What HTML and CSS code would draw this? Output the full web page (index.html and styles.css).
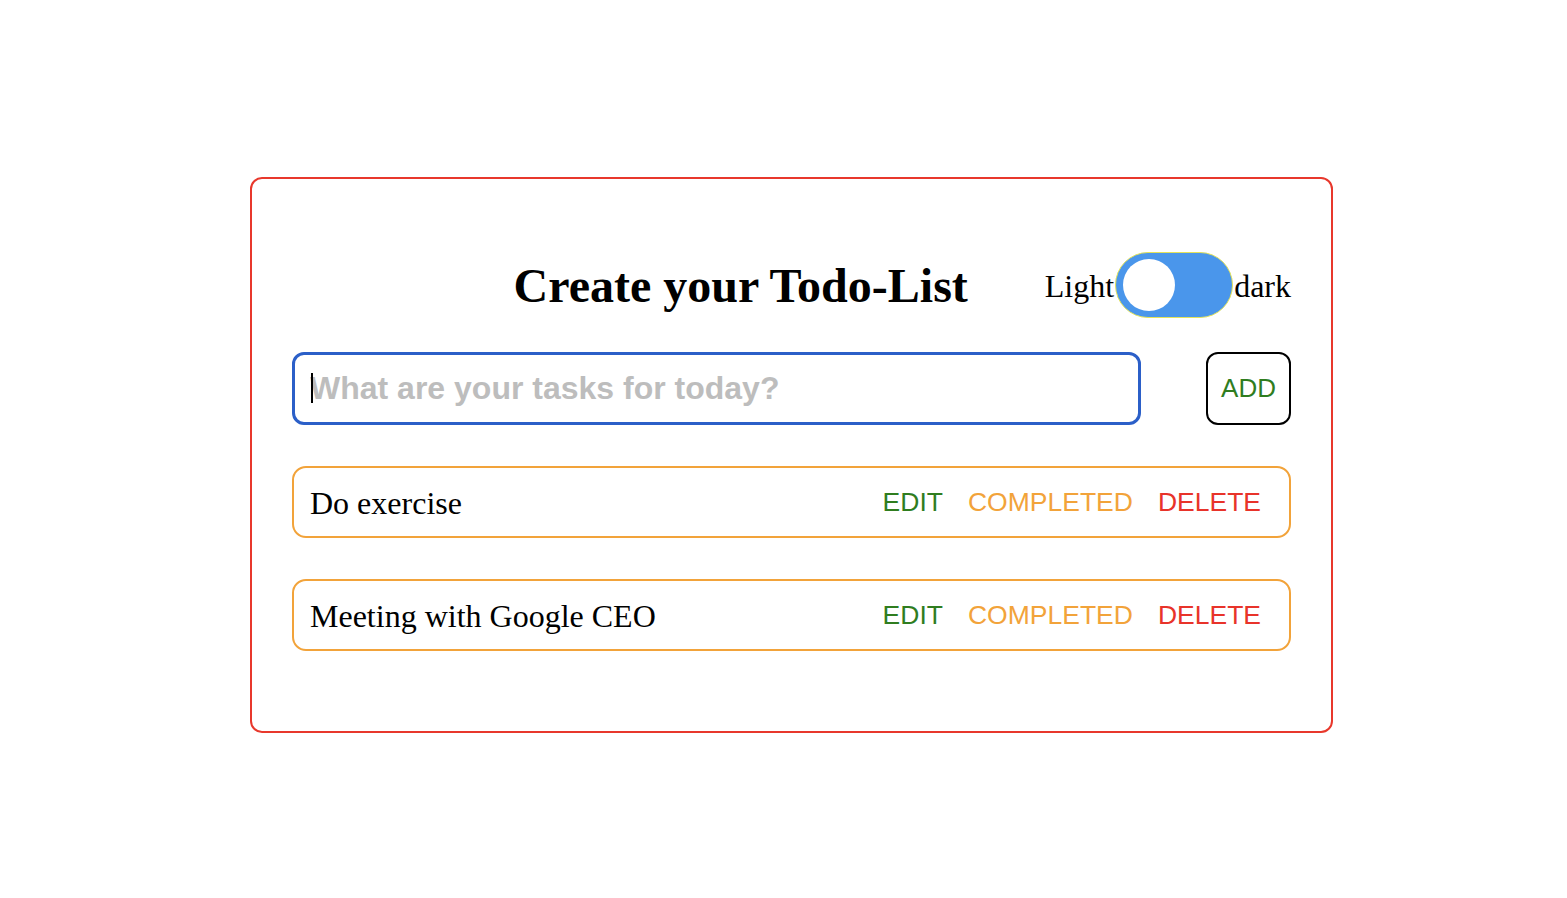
FILE: index.html
```html
<!DOCTYPE html>
<html lang="en">
<head>
<meta charset="utf-8">
<title>Todo-List</title>
<link rel="stylesheet" href="styles.css">
</head>
<body>
<main class="card">
  <header class="header">
    <h1 class="title">Create your Todo-List</h1>
    <div class="theme">
      <span class="theme-label">Light</span>
      <span class="switch"><span class="knob"></span></span>
      <span class="theme-label">dark</span>
    </div>
  </header>
  <form class="entry">
    <div class="field">
      <input class="task-input" type="text" placeholder="What are your tasks for today?">
      <span class="caret"></span>
    </div>
    <button class="add" type="button">ADD</button>
  </form>
  <ul class="list">
    <li class="item">
      <span class="item-text">Do exercise</span>
      <span class="actions">
        <button class="act edit" type="button">EDIT</button>
        <button class="act done" type="button">COMPLETED</button>
        <button class="act del" type="button">DELETE</button>
      </span>
    </li>
    <li class="item">
      <span class="item-text">Meeting with Google CEO</span>
      <span class="actions">
        <button class="act edit" type="button">EDIT</button>
        <button class="act done" type="button">COMPLETED</button>
        <button class="act del" type="button">DELETE</button>
      </span>
    </li>
  </ul>
</main>
</body>
</html>
```
FILE: styles.css
```css
* { box-sizing: border-box; }
body {
  margin: 0;
  background: #fff;
  font-family: "Liberation Serif", "Times New Roman", serif;
  color: #000;
}
.card {
  width: 1083px;
  margin: 177px 0 0 250px;
  border: 2px solid #e8382c;
  border-radius: 12px;
  padding: 73px 40px 80px 40px;
}
.header {
  display: flex;
  justify-content: flex-end;
  align-items: center;
  gap: 77px;
  height: 66px;
}
.title {
  margin: 0;
  font-size: 48px;
  font-weight: bold;
  line-height: 1;
  padding-top: 2px;
}
.theme {
  display: flex;
  align-items: center;
}
.theme-label {
  font-size: 32px;
  line-height: 1;
  padding-top: 2px;
}
.switch {
  display: flex;
  align-items: center;
  width: 118px;
  height: 66px;
  border-radius: 33px;
  background: #4a96eb;
  border: 1px solid #e4e35a;
  padding-left: 7px;
  margin: 0 1px 0 1px;
}
.knob {
  width: 52px;
  height: 52px;
  border-radius: 50%;
  background: #fff;
}
.entry {
  display: flex;
  justify-content: space-between;
  align-items: center;
  margin-top: 34px;
}
.field {
  position: relative;
  width: 849px;
}
.task-input {
  display: block;
  width: 100%;
  height: 73px;
  border: 3px solid #2b5fc8;
  border-radius: 12px;
  padding: 0 15px;
  font-family: "Liberation Sans", Arial, sans-serif;
  font-size: 32px;
  font-weight: bold;
  color: #000;
  outline: none;
}
.task-input::placeholder { color: #bdbdbd; }
.caret {
  position: absolute;
  left: 19px;
  top: 21px;
  width: 2px;
  height: 30px;
  background: #000;
}
.add {
  width: 85px;
  height: 73px;
  border: 2px solid #000;
  border-radius: 12px;
  background: #fff;
  font-family: "Liberation Sans", Arial, sans-serif;
  font-size: 26px;
  color: #2f7d1f;
  padding: 0;
}
.list {
  list-style: none;
  margin: 0;
  padding: 0;
}
.item {
  display: flex;
  justify-content: space-between;
  align-items: center;
  height: 72px;
  margin-top: 41px;
  border: 2px solid #f2a33a;
  border-radius: 14px;
  padding: 0 28px 0 16px;
}
.item-text {
  font-size: 32px;
  padding-top: 3px;
}
.actions {
  display: flex;
  gap: 25px;
}
.act {
  border: none;
  background: none;
  padding: 0;
  font-family: "Liberation Sans", Arial, sans-serif;
  font-size: 26.5px;
}
.edit { color: #2f7d1f; }
.done { color: #f2a33a; }
.del { color: #e8332a; }
```
